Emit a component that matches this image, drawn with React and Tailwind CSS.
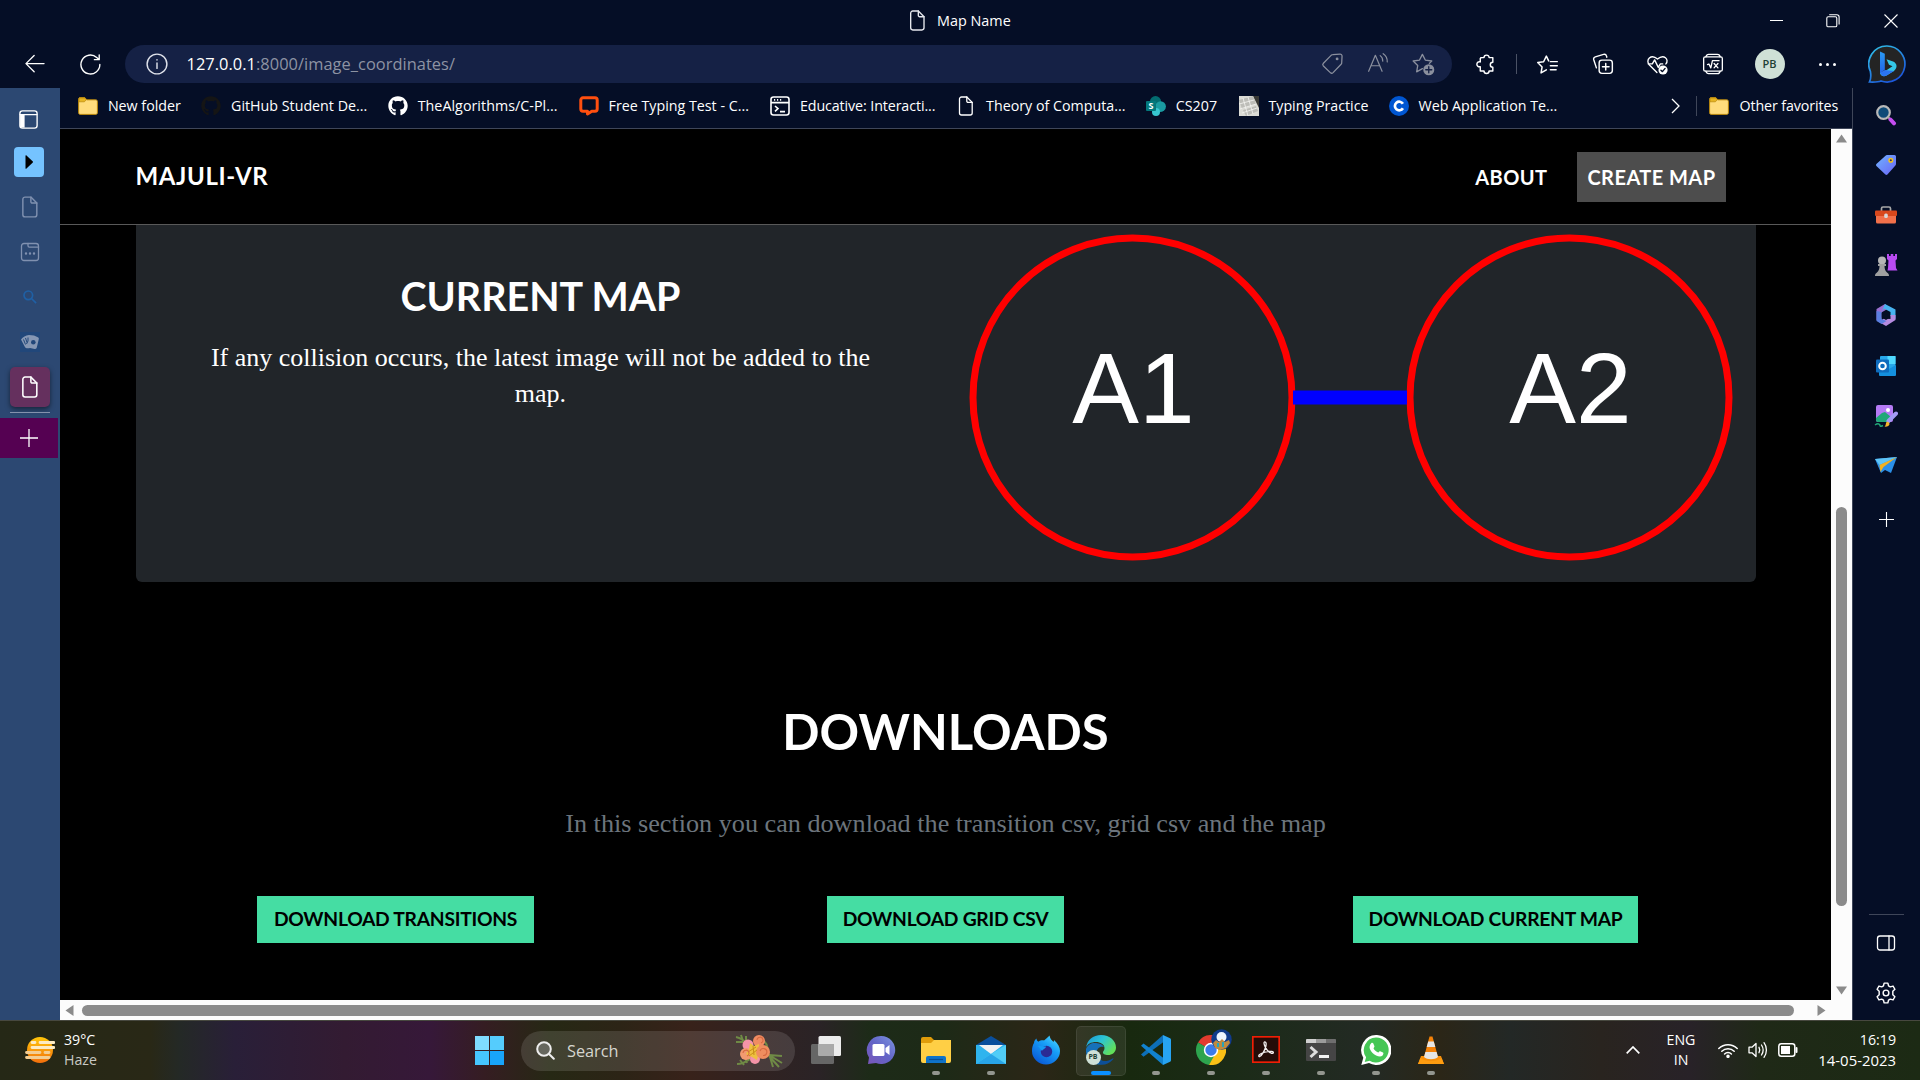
import React from "react";
import { FaGithub } from "react-icons/fa6";

const line = { fill: "none", stroke: "currentColor", strokeWidth: 1.3, strokeLinecap: "round", strokeLinejoin: "round" };

function Icon({ s = 22, className = "", children, ...rest }) {
  return (
    <svg width={s} height={s} viewBox="0 0 20 20" className={`shrink-0 ${className}`} {...line} {...rest}>
      {children}
    </svg>
  );
}

const Doc = (p) => (
  <Icon {...p}>
    <path d="M5.5 1h5.3L16.2 6.4V17a2 2 0 0 1-2 2H5.5a2 2 0 0 1-2-2V3a2 2 0 0 1 2-2z" />
    <path d="M10.8 1v4.2a1.2 1.2 0 0 0 1.2 1.2h4.2" />
  </Icon>
);

const Folder = () => (
  <svg width="20" height="20" viewBox="0 0 20 20" className="shrink-0">
    <path d="M.6 3.2C.6 2.2 1.2 1.6 2 1.6h4.8l2 2.2h8.8c1 0 1.8.6 1.8 1.6v11.4c0 1-.8 1.6-1.6 1.6H2.2c-1 0-1.6-.7-1.6-1.6z" fill="#ffdc7c" stroke="#b8860b" strokeWidth="1" />
    <path d="M1 3.2c0-.8.4-1.2 1.2-1.2h4.5l1.6 1.8-1.9 2H1z" fill="#e6b422" stroke="#b8860b" strokeWidth=".7" />
  </svg>
);

const Monkeytype = () => (
  <svg width="20" height="20" viewBox="0 0 20 20" className="shrink-0">
    <path d="M4 1.800h12a2.200 2.200 0 0 1 2.200 2.200v9a2.200 2.200 0 0 1-2.200 2.200h-3.200L8.500 18v-2.800H4A2.200 2.200 0 0 1 1.800 13V4A2.200 2.200 0 0 1 4 1.800z" fill="none" stroke="#ff4f0f" strokeWidth="3" strokeLinejoin="round" />
  </svg>
);

const Educative = () => (
  <svg width="20" height="20" viewBox="0 0 20 20" className="shrink-0" fill="none" stroke="#fff" strokeWidth="1.6">
    <rect x="1" y="1" width="18" height="18" rx="2.5" />
    <path d="M1 6.600h18M5 10l3 2.600L5 15.400M10 15.600h5" />
    <path d="M4 3.900h1.200M7 3.900h1.200M10 3.900h1.200" />
  </svg>
);

const Sharepoint = () => (
  <svg width="20" height="20" viewBox="0 0 20 20" className="shrink-0">
    <circle cx="9.5" cy="5.600" r="5.600" fill="#036c70" />
    <circle cx="14.600" cy="10.600" r="5.300" fill="#1a9ba1" />
    <circle cx="10" cy="16" r="4" fill="#37c6d0" />
    <rect x="0" y="5" width="10" height="10" rx="1" fill="#03787c" />
    <text x="5" y="13.200" textAnchor="middle" fontSize="9" fontWeight="700" fill="#fff" fontFamily="Open Sans">S</text>
  </svg>
);

const Keys = () => (
  <svg width="20" height="20" viewBox="0 0 20 20" className="shrink-0">
    <rect width="20" height="20" fill="#dcdcd6" />
    <path d="M14 0h6v12z" fill="#3a3a36" />
    <path d="M0 4l14-4 3 8L3 13zM4 14l13-4 2 5-12 5z" fill="#bdbdb8" />
    <path d="M0 8l15-4M1 13l16-5M3 17l15-5M4 2l5 18M9 1l5 17" stroke="#f5f5f2" strokeWidth=".8" />
  </svg>
);

const Coursera = () => (
  <svg width="20" height="20" viewBox="0 0 20 20" className="shrink-0">
    <circle cx="10" cy="10" r="10" fill="#0056d2" />
    <path d="M13.900 12.200a4.300 4.300 0 1 1 0-4.400" fill="none" stroke="#fff" strokeWidth="2.700" />
  </svg>
);

const bookmarks = [
  [<Folder />, "New folder", "w-[72.6px]"],
  [<FaGithub className="size-5 shrink-0 text-[#151515]" />, "GitHub Student De...", "w-[136px]"],
  [<FaGithub className="size-5 shrink-0" />, "TheAlgorithms/C-Pl...", "w-[140.4px] tracking-[0.05px]"],
  [<Monkeytype />, "Free Typing Test - C...", "w-[140.8px]"],
  [<Educative />, "Educative: Interacti...", "w-[135.5px] tracking-[-0.1px]"],
  [<Doc s={20} />, "Theory of Computa...", "w-[139.2px]"],
  [<Sharepoint />, "CS207", "w-[42px]"],
  [<Keys />, "Typing Practice", "w-[99.5px]"],
  [<Coursera />, "Web Application Te...", "w-[139px]"],
];

function TitleBar() {
  return (
    <div className="flex h-[41px] items-center">
      <div className="flex w-[1747px] items-center pl-[907px]">
        <Doc s={21} className="text-[#e6e8ee]" />
        <span className="ml-[9px] text-[14.4px]">Map Name</span>
      </div>
      <div className="flex w-[58px] justify-center"><div className="h-px w-[13px] bg-white" /></div>
      <div className="flex w-[56px] justify-center">
        <svg width="14" height="14" viewBox="0 0 14 14" fill="none" stroke="#fff" strokeWidth="1.1">
          <rect x=".8" y="2.800" width="10" height="10" rx="1.400" /><path d="M3.200.7h7.600a2.300 2.300 0 0 1 2.300 2.300v7.600" />
        </svg>
      </div>
      <div className="flex w-[59px] justify-center">
        <svg width="14" height="14" viewBox="0 0 14 14" stroke="#fff" strokeWidth="1.1"><path d="M.5.5l13 13M13.500.5l-13 13" /></svg>
      </div>
    </div>
  );
}

function Toolbar() {
  return (
    <div className="flex h-[47px] items-center pb-[1px]">
      <div className="flex w-[69px] justify-center"><svg width="20" height="20" viewBox="0 0 21 20" {...line} strokeWidth={1.4}><path d="M20 9.600H1M9.600 1L1 9.600l8.600 8.600" /></svg></div>
      <div className="flex w-[42px] justify-center">
        <svg width="21" height="21" viewBox="0 0 20 20" {...line} strokeWidth={1.3}><path d="M18.900 10a9 9 0 1 1-3-6.700l2.200 2M18.300.8v4.600h-4.600" /></svg>
      </div>
      <div className="ml-[14px] flex h-[38px] w-[1327px] items-center rounded-full bg-[#152145]">
        <Icon s={22} className="ml-[21px] text-[#dfe2ea]"><circle cx="10" cy="10" r="9" /><path d="M10 9v5M10 6v.3" /></Icon>
        <span className="ml-[18.500px] text-[16.4px] tracking-[0.04px] whitespace-nowrap">127.0.0.1<span className="text-[#8d93a3]">:8000/image_coordinates/</span></span>
        <div className="ml-auto flex pr-[6px] text-[#8a8f9d]">
          <div className="flex w-[45.5px] justify-center"><Icon s={23} strokeWidth={1.1}><path d="M10.200 2.200l6.300-.4a1.700 1.700 0 0 1 1.800 1.800l-.3 6c0 .4-.2.8-.5 1l-7 7.300a1.700 1.700 0 0 1-2.400 0l-6-5.700a1.700 1.700 0 0 1 0-2.400L9 2.700c.3-.3.7-.5 1.200-.5z" /><circle cx="14" cy="6" r=".7" fill="currentColor" /></Icon></div>
          <div className="flex w-[45.5px] justify-center"><Icon s={22} strokeWidth={1.1}><path d="M1.500 17.500L7.600 3l6.100 14.500M3.600 12.500h8M12 3.300c1.700 1.200 2.400 3 2.300 5M14.700 1.500c2.500 1.700 3.900 4.300 3.700 7.500" /></Icon></div>
          <div className="flex w-[45.5px] justify-center"><Icon s={24} strokeWidth={1.1}><path d="M9.500 13.900l-4.800 2.600.9-5.200L1.800 7.500l5.300-.8L9.500 2l2.400 4.700 5.400.8-2 2" /><circle cx="14.800" cy="14.800" r="4.600" fill="currentColor" stroke="none" /><path d="M14.800 12.300v5M12.300 14.800h5" stroke="#152145" /></Icon></div>
        </div>
      </div>
      <div className="ml-[6px] flex w-[56px] justify-center"><Icon s={22}><path d="M5.500 4.200h2.700a2.300 2.300 0 1 1 4.600 0h3.400v4.200a2.300 2.300 0 1 0 0 4.600v3.400h-3.400a2.300 2.300 0 1 1-4.600 0H4.800v-4a2.300 2.300 0 1 1 0-4.300V4.900z" /></Icon></div>
      <div className="ml-[2px] h-5 w-px bg-[#4b5265]" />
      <div className="ml-[3px] flex w-[55px] justify-center"><Icon s={23}><path d="M9 14.600l-4.600 2.700.9-5.200L1.500 8.300l5.100-.7L9 2.700l2 4.200M12.500 7.500h6M12.500 11h6M12.500 14.500h5" /></Icon></div>
      <div className="flex w-[55px] justify-center"><Icon s={22}><rect x="6.500" y="6.500" width="12" height="12" rx="2.500" /><path d="M12.500 9.500v6M9.500 12.500h6M4 13.500L1.600 6.200a2.200 2.200 0 0 1 1.400-2.700l7.500-2.200a2.200 2.200 0 0 1 2.700 1.500l.3 1" /></Icon></div>
      <div className="flex w-[55px] justify-center"><Icon s={23} strokeWidth={1.2}><path d="M9.500 17L3 10.500C-1 6 4.500.5 10 5.300 15.500.5 20.500 5.500 17.300 9.500M2 9.500h3.500L7.500 6l3.200 6.500 1.800-3h2" /><circle cx="14.800" cy="14.800" r="4" fill="#fff" stroke="none" /><path d="M13 15l1.300 1.200 2.300-2.800" stroke="#050e26" /></Icon></div>
      <div className="flex w-[55px] justify-center"><Icon s={22} strokeWidth={1.2}><rect x="1.500" y="3.500" width="17" height="13" rx="1.500" /><path d="M3.500 3.500C4 1.700 5 1.200 6 1.200h8c1.500 0 2.300 1 2.500 2.300M3.500 16.500c.5 1.800 1.500 2.300 2.500 2.300h8c1.500 0 2.300-1 2.500-2.300M5 10.500l1.300-.5L8 13.500 9.500 7h6M11 9.500l3.500 4M14.500 9.500l-3.500 4" /></Icon></div>
      <div className="flex w-[59px] justify-center"><div className="flex size-[30px] items-center justify-center rounded-full bg-[#cfe0d6] text-[11px] font-semibold text-[#1f4034]">PB</div></div>
      <div className="flex w-[56px] justify-center gap-[4px]"><i className="size-[3px] rounded-full bg-white" /><i className="size-[3px] rounded-full bg-white" /><i className="size-[3px] rounded-full bg-white" /></div>
      <div className="flex w-[64px] justify-center">
        <svg width="38" height="38" viewBox="0 0 38 38">
          <defs>
            <linearGradient id="bb" x1="0" y1="0" x2=".6" y2="1"><stop offset="0" stopColor="#31c5e8" /><stop offset="1" stopColor="#1c58dc" /></linearGradient>
            <linearGradient id="bl" x1="0" y1="0" x2="0" y2="1"><stop offset="0" stopColor="#2a9bf5" /><stop offset="1" stopColor="#2366e8" /></linearGradient>
          </defs>
          <path d="M19 1a18 18 0 1 1-6 35c-2 .9-6 1.200-11.500 1C3 34 3 30 2.400 26.500A18 18 0 0 1 19 1z" fill="#242424" stroke="url(#bb)" strokeWidth="1.700" />
          <path d="M12 6.500l4.800 2.200v16L12 28z" fill="url(#bl)" />
          <path d="M18.500 14.200l2.500 5.500 3.500 1.600-8 5.300L12 28c1 3.200 3.800 4 6.600 2.400l7.300-4.500c3.700-2.400 3.600-7.500-.8-9.300z" fill="#34c8e6" />
          <path d="M12 27.500l5-2.500 8.900.9-7.300 4.500C15.800 32 13 31 12 27.500z" fill="#2b74f0" />
        </svg>
      </div>
    </div>
  );
}

function TabStrip() {
  const dim = "text-[#8091b0]";
  return (
    <div className="flex w-[60px] shrink-0 flex-col bg-[#2c4872]">
      <div className="mt-[9px] flex h-[44px] items-center pl-[18px]">
        <Icon s={21} strokeWidth={1.3}><rect x="1.800" y="1.800" width="16.400" height="16.400" rx="2.500" /><path d="M2 5.300h16" /><rect x="2" y="5.300" width="4.300" height="12.400" fill="#fff" stroke="none" /></Icon>
      </div>
      <div className="mt-[6px] ml-[14px] flex h-[30px] w-[30px] items-center justify-center rounded-[4px] bg-[#75c3ff]">
        <svg width="8" height="14" viewBox="0 0 8 14"><path d="M.5.8C.5.200 1 0 1.500.400L7.600 6.300a1 1 0 0 1 0 1.400L1.500 13.600c-.5.400-1 .2-1-.4z" fill="#000" /></svg>
      </div>
      <div className={`mt-[7px] flex h-[45px] items-center justify-center ${dim}`}><Doc s={22} /></div>
      <div className={`flex h-[45px] items-center justify-center ${dim}`}><Icon s={20}><rect x="1.500" y="1.500" width="17" height="17" rx="2.500" /><path d="M8 1.500v2.300c0 1 .5 1.400 1.300 1.400h9.200" /><path d="M6 11.500v.1M10 11.500v.1M14 11.500v.1" strokeWidth="2.400" /></Icon></div>
      <div className="flex h-[45px] items-center justify-center text-[#1f60a5]"><svg width="14" height="14" viewBox="0 0 14 14" fill="none" stroke="currentColor" strokeWidth="1.700"><circle cx="5.300" cy="5.300" r="4.300" /><path d="M8.500 8.500l4.600 4.600" /></svg></div>
      <div className="flex h-[45px] items-center justify-center pt-[1px]">
        <div className="flex size-5 items-center justify-center bg-[#21477a]">
          <svg width="18" height="15" viewBox="0 0 18 15" fill="#8597b4"><path d="M0 4.500C2 2 4.500.5 8 0l5 .5 3.800 1.800a1.500 1.500 0 0 1 1 1.700l-2 8.500a1.800 1.800 0 0 1-2.200 1.400L9 13c-2 .6-3.500.3-4.800-.6z" /><circle cx="12.300" cy="7.200" r="2.300" fill="#21477a" /><path d="M2.500 4.500l2 5M4.500 3l1.500 4.500M7 2.500V6L5.500 9" fill="none" stroke="#21477a" strokeWidth="1" /></svg>
        </div>
      </div>
      <div className="mt-[3px] ml-[10px] flex size-[40px] items-center justify-center rounded-[5px] bg-[#65305e] shadow-[0_2px_5px_rgba(0,0,0,0.5)]"><Doc s={22} strokeWidth={1.4} /></div>
      <div className="mt-[5px] ml-[10px] h-px w-[40px] bg-[#8492ad]" />
      <div className="mt-[5px] flex h-[40px] w-[58px] items-center justify-center bg-[#550152] pb-[1px]">
        <svg width="18" height="18" viewBox="0 0 18 18" stroke="#fff" strokeWidth="1.300"><path d="M9 0v18M0 9h18" /></svg>
      </div>
    </div>
  );
}

function FavoritesBar() {
  return (
    <div className="flex h-[41px] items-center border-b border-[#3f4659] pb-[4px] pl-[18px] text-[14.25px] whitespace-nowrap">
      <div className="flex gap-[20.700px]">
        {bookmarks.map(([icon, label, w]) => (
          <div key={label} className="flex items-center gap-[9.900px]">{icon}<span className={w}>{label}</span></div>
        ))}
      </div>
      <svg className="ml-[114px]" width="9" height="16" viewBox="0 0 9 16" fill="none" stroke="#fff" strokeWidth="1.300"><path d="M1 1l7 7-7 7" /></svg>
      <div className="ml-[16px] h-5 w-px bg-[#3f4659]" />
      <div className="ml-[12px] flex items-center gap-[10px]"><Folder /><span className="tracking-[-0.1px]">Other favorites</span></div>
    </div>
  );
}

function MapDiagram() {
  return (
    <svg width="810" height="357" viewBox="0 0 810 357" fontFamily="Liberation Sans, sans-serif" fontSize="100" fontWeight="400" fill="#fff" textAnchor="middle">
      <circle cx="186.500" cy="172.500" r="159.500" fill="none" stroke="#f00" strokeWidth="7" />
      <circle cx="623.500" cy="172.500" r="159.500" fill="none" stroke="#f00" strokeWidth="7" />
      <rect x="347" y="165.500" width="114" height="14" fill="#00f" />
      <text x="187.500" y="198">A1</text>
      <text x="624.500" y="198">A2</text>
    </svg>
  );
}

const SERIF = "font-['Liberation_Serif',serif]";

function Page() {
  return (
    <div className="w-[1771px] bg-black font-['Lato',sans-serif] font-bold">
      <nav className="flex h-[96px] items-center border-b border-[#595959] pr-[105px] pl-[75.500px]">
        <span className="pb-[1px] text-[24px] tracking-[0.6px]">MAJULI-VR</span>
        <div className="ml-auto flex items-center text-[20px] tracking-[0.45px]">
          <span>ABOUT</span>
          <span className="ml-[29.500px] flex h-[50px] w-[149px] items-center justify-center bg-[#4d4d4d]">CREATE MAP</span>
        </div>
      </nav>
      <section className="mx-auto flex h-[357px] w-[1620px] rounded-b-[6px] bg-[#212529]">
        <div className="flex w-[810px] flex-col items-center pt-[47px] text-center">
          <h2 className="text-[39.400px] leading-[48px]">CURRENT MAP</h2>
          <p className={`mt-[20px] w-[680px] text-[26px] leading-[36px] font-normal ${SERIF}`}>
            If any collision occurs, the latest image will not be added to the map.
          </p>
        </div>
        <MapDiagram />
      </section>
      <section className="mx-auto w-[1650px] pt-[119px] text-center">
        <h2 className="text-[49px] leading-[60px]">DOWNLOADS</h2>
        <p className={`mt-[45px] text-[26.200px] leading-[36px] font-normal text-[#6c757d] ${SERIF}`}>
          In this section you can download the transition csv, grid csv and the map
        </p>
        <div className="mt-[54px] grid grid-cols-3 justify-items-center text-[19.300px] tracking-[-0.28px] text-black">
          <button className="h-[47px] w-[277px] bg-[#45dda3]">DOWNLOAD TRANSITIONS</button>
          <button className="h-[47px] w-[237px] bg-[#45dda3]">DOWNLOAD GRID CSV</button>
          <button className="h-[47px] w-[285px] bg-[#45dda3]">DOWNLOAD CURRENT MAP</button>
        </div>
      </section>
    </div>
  );
}

function SideBar() {
  const cell = "flex h-[50.1px] items-center justify-center";
  return (
    <div className="flex flex-1 flex-col border-l border-[#3f4659] pt-[2px] pr-[1px]">
      <div className={cell}><svg width="22" height="22" viewBox="0 0 22 22"><circle cx="8.500" cy="8.500" r="6.300" fill="#0d4a78" stroke="#b9b9b9" strokeWidth="2.200" /><path d="M13 13l2.500 2.500" stroke="#aaa" strokeWidth="2" /><path d="M15.500 15.500l3.500 3.800" stroke="#c44df0" strokeWidth="4" strokeLinecap="round" /></svg></div>
      <div className={cell}><svg width="22" height="22" viewBox="0 0 22 22"><defs><linearGradient id="tg" x1="0" y1="0" x2="1" y2="1"><stop offset="0" stopColor="#70b4ff" /><stop offset="1" stopColor="#6a63f6" /></linearGradient></defs><path d="M12 1h7.500a1.500 1.500 0 0 1 1.500 1.500V10c0 .6-.2 1-.6 1.500l-8 9a1.500 1.500 0 0 1-2 0l-9-8.500a1.500 1.500 0 0 1 0-2L10.500 1.700C11 1.200 11.400 1 12 1z" fill="url(#tg)" /><circle cx="15.800" cy="6.300" r="1.800" fill="#30306a" stroke="#f2c21c" strokeWidth="1.500" /></svg></div>
      <div className={cell}><svg width="24" height="20" viewBox="0 0 24 20"><path d="M7.500 6V3.500A1.500 1.500 0 0 1 9 2h6a1.500 1.500 0 0 1 1.500 1.500V6" fill="none" stroke="#a8a8a8" strokeWidth="1.700" /><rect x="2" y="9" width="20" height="9.500" rx="1.500" fill="#f2704a" /><rect x="1" y="5.500" width="22" height="5.500" rx="1" fill="#d9481c" /><rect x="10.200" y="8.500" width="3.600" height="4.500" rx="1.500" fill="#d8d8d8" /></svg></div>
      <div className={cell}><svg width="24" height="24" viewBox="0 0 24 24"><path d="M13 1h2v2h1.700V1h2.600v2H21V1h2v5l-1.500 1.500.5 7.500 1.500 2.500h-10L14 15l.5-7.500L13 6z" fill="#b94bf3" /><circle cx="8" cy="7.500" r="4" fill="#b5b5b5" /><path d="M4 11h8v2h-1.500c0 3 .8 5 2.500 6.500 1.500 1 2 2 2 3.500H1c0-1.500.5-2.500 2-3.500C4.700 18 5.500 16 5.500 13H4z" fill="#a0a0a0" /></svg></div>
      <div className={cell}><svg width="22" height="24" viewBox="0 0 22 24"><path d="M10 1L1.500 6v11l5 2.500V9.500L14 5z" fill="#9a6fd0" /><path d="M10 1l10.500 5.500V16l-5-3V9L9 5.500 6.500 9z" fill="#47b3f0" /><path d="M20.500 12v5L11 23l-7-4 5-3.500 6.500.5V12z" fill="#b68be0" /><path d="M1.500 8l5 1v7l5 2-5 3-5-3z" fill="#5a7fe0" /><path d="M11 7.800l4 2.200v4.500L11 17l-4.200-2.500V10z" fill="#050e26" /></svg></div>
      <div className={cell}><svg width="22" height="22" viewBox="0 0 22 22"><rect x="5" y="1" width="15.500" height="14" rx="1" fill="#28a8ea" /><rect x="12.500" y="1" width="8" height="8" fill="#50d9ff" /><path d="M4 10l8 5 9-5v10a1 1 0 0 1-1 1H5a1 1 0 0 1-1-1z" fill="#1490df" /><rect x="1" y="4.500" width="13" height="13" rx="1" fill="#0f6cbd" /><circle cx="7.500" cy="11" r="3.300" fill="none" stroke="#fff" strokeWidth="2" /></svg></div>
      <div className={cell}><svg width="24" height="24" viewBox="0 0 24 24"><rect x="2" y="1" width="17" height="17" rx="2" fill="#b57bf5" /><path d="M2 14l6-5 3-1 6 5-4 5H4a2 2 0 0 1-2-2z" fill="#21a878" /><circle cx="14" cy="6" r="2" fill="#fff" /><path d="M22 9.500L14.500 17" stroke="#a29bf5" strokeWidth="4" strokeLinecap="round" /><path d="M10.500 22.500c1.500-.5 1-3 2-4.500 1.500-1 3 .5 3 2 0 2-3 3-5 2.500z" fill="#f5b52c" /><path d="M1 21c3-2 5-1 5 .5s2 .5 3 0" fill="none" stroke="#21a878" strokeWidth="1.500" /></svg></div>
      <div className={cell}><svg width="22" height="18" viewBox="0 0 22 18"><path d="M0 2l22-2-6 16-6-3-4 3z" fill="#2b8fe8" /><path d="M0 2l22-2L4.500 8z" fill="#5ec4f7" /><path d="M22 0L4.500 8 5.500 15l3-5z" fill="#f2b11e" /></svg></div>
      <div className="flex h-[58px] items-center justify-center"><svg width="15" height="15" viewBox="0 0 15 15" stroke="#fff" strokeWidth="1.100"><path d="M7.500 0v15M0 7.500h15" /></svg></div>
      <div className="mt-auto h-px w-[35px] self-center bg-[#3f4659]" />
      <div className="mt-[3px] flex h-[50px] items-center justify-center"><Icon s={20}><rect x="1.500" y="3" width="17" height="14" rx="2.500" /><path d="M13 3v14" /></Icon></div>
      <div className="mb-[2px] flex h-[50px] items-center justify-center"><Icon s={22}><path d="M8.300 1h3.400l.6 2.500 1.600.9 2.500-.7 1.700 2.900-1.900 1.800v3.200l1.900 1.800-1.700 2.900-2.500-.7-1.600.9-.6 2.500H8.300l-.6-2.500-1.600-.9-2.500.7-1.700-2.900 1.900-1.800V8.400L1.900 6.600l1.700-2.900 2.500.7 1.600-.9z" /><circle cx="10" cy="10" r="2.600" /></Icon></div>
    </div>
  );
}

function TaskIcon({ children, dot = true }) {
  return (
    <div className="flex h-[60px] w-[55px] flex-col items-center">
      <div className="mt-[8px] flex h-[42px] items-center">{children}</div>
      {dot && <div className="h-[4px] w-[8px] rounded-full bg-[#93968f]" />}
    </div>
  );
}

function Taskbar() {
  return (
    <div className="flex h-[60px] items-center border-t border-[#47483f] bg-[linear-gradient(90deg,#252816_0px,#292816_150px,#242926_180px,#291f38_235px,#331b32_345px,#361839_430px,#351d22_485px,#262814_550px,#2c2416_620px,#38221a_690px,#34221f_730px,#2a2326_820px,#1d2b18_870px,#1d2a17_940px,#2b2617_1040px,#18290f_1130px,#1b2b17_1230px,#232a24_1370px,#2b2617_1440px,#232826_1510px,#29241f_1600px,#282228_1690px,#1f2917_1760px,#1c2a14_1920px)] text-[14.200px] leading-[20px]">
      <div className="flex w-[475px] items-center pb-[1px] pl-[25px]">
        <svg width="30" height="28" viewBox="0 0 30 28"><defs><linearGradient id="sun" x1="0" y1="0" x2="0" y2="1"><stop offset="0" stopColor="#ffc60a" /><stop offset="1" stopColor="#f26f0c" /></linearGradient></defs><circle cx="15" cy="14" r="13" fill="url(#sun)" /><path d="M7 6.500h3M15 6.500h14M7 11.500h22" stroke="#fdebc3" strokeWidth="2.800" strokeLinecap="round" /><path d="M1.500 16.500H15M20 16.500h4M1.500 21.500H24" stroke="#f3cd92" strokeWidth="2.800" strokeLinecap="round" /></svg>
        <div className="ml-[9px]"><div>39°C</div><div className="text-[#c9c9c4]">Haze</div></div>
      </div>
      <div className="grid size-[29px] grid-cols-2 gap-[1px]">
        <div className="bg-[#7fdcff]" /><div className="bg-[#55ccfd]" /><div className="bg-[#46c6ff]" /><div className="bg-[#18a4fb]" />
      </div>
      <div className="ml-[17px] flex h-[40px] w-[274px] items-center rounded-full bg-white/12 pr-[12px] pl-[15px]">
        <svg width="19" height="19" viewBox="0 0 19 19" fill="#66675e" stroke="#eee" strokeWidth="2" strokeLinecap="round"><circle cx="8" cy="8" r="6.800" /><path d="M13 13l4.800 4.800" /></svg>
        <span className="ml-[12px] text-[16.300px] text-[#d6d6cf]">Search</span>
        <svg className="ml-auto" width="48" height="34" viewBox="0 0 48 34">
          <path d="M1 3c5 1 9 4 13 8M6 1l2 6M1 8h7M11 2v6M2 30c5 0 9-2 13-5M5 26l4 5M10 24l2 5M29 7c3 3 4 6 3 9M34 21l13 8M34 22l10 11M35 23l3 10M34 21l13 1" stroke="#6f8a45" strokeWidth="2" fill="none" />
          <circle cx="13" cy="11" r="5.500" fill="#f494a8" /><circle cx="24" cy="7" r="6" fill="#f08c62" /><circle cx="11" cy="20" r="6" fill="#f29a70" /><circle cx="20" cy="25" r="5" fill="#f493a8" /><path d="M11 20l3-5 1-6 4 3 5-2v5l4 3-5 4-1 4-5-3z" fill="#eec040" /><circle cx="28" cy="18" r="7" fill="#ef8e5f" />
          <path d="M13 18l8-5M14 22l8-6M18 12l1 9" stroke="#c98f1a" strokeWidth="1" /><path d="M25 17a3.500 3.500 0 1 1 3 4.500M22 6a3 3 0 1 1 4 3M8 19a3 3 0 1 1 4 3" fill="none" stroke="#d76b42" strokeWidth="1.100" />
        </svg>
      </div>
      <div className="ml-[3px] flex">
        <TaskIcon dot={false}><svg width="30" height="28" viewBox="0 0 30 28"><rect x="0" y="8" width="23" height="20" rx="1.500" fill="#666" /><rect x="7.500" y="0" width="22.500" height="20" rx="1.500" fill="#ececec" /><rect x="7.500" y="8" width="15.500" height="12" fill="#aaa" /></svg></TaskIcon>
        <TaskIcon dot={false}><svg width="30" height="30" viewBox="0 0 30 30"><defs><linearGradient id="ch" x1="0" y1="1" x2="1" y2="0"><stop offset="0" stopColor="#7a55b8" /><stop offset=".5" stopColor="#6264c7" /><stop offset="1" stopColor="#7c94e0" /></linearGradient></defs><path d="M15 1a14 14 0 1 1-5 27L2 29l1-6.500A14 14 0 0 1 15 1z" fill="url(#ch)" /><rect x="6.500" y="9" width="12" height="12" rx="1.500" fill="#fff" /><path d="M19.500 13l4-3v10l-4-3z" fill="#fff" /></svg></TaskIcon>
        <TaskIcon><svg width="30" height="28" viewBox="0 0 30 28"><path d="M0 3a2 2 0 0 1 2-2h8l3 3h15a2 2 0 0 1 2 2v6H0z" fill="#e09c0a" /><path d="M0 7h10l3-3h17v21a2 2 0 0 1-2 2H2a2 2 0 0 1-2-2z" fill="#ffcf45" /><path d="M5 27v-5a2 2 0 0 1 2-2h16a2 2 0 0 1 2 2v5z" fill="#0f73c9" /><path d="M8 23.500h14" stroke="#0a4e94" strokeWidth="1.200" /></svg></TaskIcon>
        <TaskIcon><svg width="30" height="28" viewBox="0 0 30 28"><path d="M0 9L15 0l15 9v4H0z" fill="#0a4f9c" /><path d="M0 9h30v19H0z" fill="#2fb4ee" /><path d="M3 9h24l-12 9z" fill="#f2f2f2" /><path d="M30 9L15 18 0 28h30z" fill="#51cdf7" /><path d="M15 18l15 10H0z" fill="#28a5e8" /></svg></TaskIcon>
        <TaskIcon dot={false}><svg width="30" height="30" viewBox="0 0 30 30"><defs><linearGradient id="fx" x1="1" y1="0" x2=".3" y2="1"><stop offset="0" stopColor="#58e4ff" /><stop offset=".45" stopColor="#179df7" /><stop offset="1" stopColor="#0a5bd8" /></linearGradient></defs><path d="M3 8c0-2 1.500-4 2.500-4.500 0 1.500.8 2.500 1.800 3.200C9 5.500 11 5.200 13 5.400 15 4 17 2 18.500.5c.5 3 2 4.500 4 6.500C23 6 23 5.500 23 5c4 4 6 7 6 11a14 13.500 0 0 1-28 0c0-3.500.8-6 2-8z" fill="url(#fx)" /><circle cx="15.500" cy="16.500" r="5.700" fill="#2b2a94" /><path d="M7 11c3-1 5 1 8 .5 0 2-3 2.500-4 4.500" fill="#159af5" /></svg></TaskIcon>
        <div className="mx-[2.500px] mt-[5px] flex h-[50px] w-[50px] flex-col items-center rounded-[5px] bg-white/8 ring-1 ring-white/8 ring-inset">
          <div className="relative mt-[9px] h-[36px] w-[30px]">
            <svg width="30" height="30" viewBox="0 0 30 30"><defs><linearGradient id="eg" x1="0" y1="0" x2="1" y2=".6"><stop offset="0" stopColor="#1a93d6" /><stop offset=".5" stopColor="#2cc4d4" /><stop offset="1" stopColor="#62e05a" /></linearGradient></defs><path d="M0 13C1 5 7 0 15 0c9 0 15 6 15 12.500 0 5-4 7.500-8 7.500-3 0-5.500-1-5-3 .3-1 1.500-1.500 1.500-4 0-3.500-4-6-8.500-6C5 7 1 9 0 13z" fill="url(#eg)" /><path d="M0 14C2 9 6 7.500 10 8c4 .3 7 2 8 4-4-1.500-8 2-7.500 7 .5 5 6 8.500 11 7.500C13 33-1 29 0 14z" fill="#1671b9" /><path d="M10.500 18c0 6 6 9.500 12 7.500 2-.7 3.500-1.500 4.700-2.500.5.5 0 1.500-.7 2C23 29 18 30.500 13.500 29.500z" fill="#0d4f97" /></svg>
            <span className="absolute top-[15px] left-0 flex size-[15px] items-center justify-center rounded-full bg-[#cfe0d6] text-[7px] font-bold text-[#1f4034]">PB</span>
          </div>
          <div className="h-[4px] w-[20px] rounded-full bg-[#0a90ff]" />
        </div>
        <TaskIcon><svg width="30" height="30" viewBox="0 0 30 30"><path d="M22 0L0 19.500l2.500 2.200L22.500 7z" fill="#0d6fb8" /><path d="M2.500 8.500L0 10.700 22 30l.5-7z" fill="#1182cf" /><path d="M22 0l6.500 3c1 .4 1.500 1 1.500 2v20c0 1-.5 1.600-1.500 2L22 30z" fill="#27a4f2" /></svg></TaskIcon>
        <TaskIcon>
          <div className="relative size-[30px]">
            <svg width="30" height="30" viewBox="0 0 30 30"><path d="M15 15L2 7.500A15 15 0 0 1 28 7.500H15z" fill="#e33b2e" /><path d="M2 7.500a15 15 0 0 0 11 22.400L21.500 18.700 15 15z" fill="#2da44e" /><path d="M28 7.500a15 15 0 0 1-15 22.400l8.500-14.900L15 7.500z" fill="#fbc116" /><circle cx="15" cy="15" r="7.200" fill="#fff" /><circle cx="15" cy="15" r="5.700" fill="#3b7bea" /></svg>
            <svg className="absolute -top-[6px] left-[15px]" width="21" height="21" viewBox="0 0 21 21"><circle cx="10.500" cy="10.500" r="10.200" fill="#103a8c" /><circle cx="10.500" cy="8" r="5" fill="#eef4ff" /><path d="M2 14l3-3 3 2 3-3 3 3 4-2 1 3-4 5-6 2-5-2z" fill="#c08a3e" /><path d="M7 14v4M12 13v5" stroke="#2aa3b8" strokeWidth="2" /></svg>
          </div>
        </TaskIcon>
        <TaskIcon><svg width="28" height="27" viewBox="0 0 28 27"><rect x=".8" y=".8" width="26.400" height="25.400" fill="#250c08" stroke="#f01e05" strokeWidth="1.700" /><path d="M12.500 6c1.800-.5 1.900 2 1.300 4.500-1 4-4 9-6 10-1.500.3-1.500-1.300.5-2.500 3-1.900 8-3 11.500-2.500 2.300.4 1.900 2.200 0 1.900-3-.5-6.300-4.900-7.300-8.200-.6-1.600-.6-2.900 0-3.200z" fill="none" stroke="#f3eeee" strokeWidth="1.300" /></svg></TaskIcon>
        <TaskIcon><svg width="30" height="22" viewBox="0 0 30 22"><rect width="30" height="22" rx="1" fill="#454545" /><path d="M0 1a1 1 0 0 1 1-1h9v4H0z" fill="#d0d0d0" /><rect x="10" width="10" height="4" fill="#9b9b9b" /><path d="M20 0h9a1 1 0 0 1 1 1v3H20z" fill="#6e6e6e" /><path d="M4.500 8l5.500 5-5.500 5" fill="none" stroke="#ddd" strokeWidth="3" /><rect x="13" y="16" width="10" height="3" fill="#f2f2f2" /></svg></TaskIcon>
        <TaskIcon>
          <svg width="30" height="30" viewBox="0 0 30 30"><path d="M15 0a15 15 0 1 1-7 28L.3 30l2-7.300A15 15 0 0 1 15 0z" fill="#fff" /><path d="M15 2.500a12.500 12.500 0 1 1-6.300 23.200l-5 1.300 1.400-4.800A12.500 12.500 0 0 1 15 2.500z" fill="#45c655" /><path d="M10.200 8.200c.7-.7 1.700-.6 2 .1l1.200 2.800c.2.5 0 1-.9 2.200.9 2 2.700 3.500 4.700 4.300.9-1 1.300-1.700 2-1.400l2.800 1.400c.7.4.4 2-.4 2.800-1.700 1.700-4 1.200-6.500 0-3-1.500-5-3.800-6.200-6.500-.7-2-.2-4.200 1.300-5.700z" fill="#fff" /></svg>
        </TaskIcon>
        <TaskIcon><svg width="26" height="28" viewBox="0 0 26 28"><path d="M3 20h20l3 8H0z" fill="#f78f0a" /><path d="M11.500.5h3L20 21c-3 3-11 3-14 0z" fill="#f58208" /><path d="M10.200 5.500h5.600l1.500 5.500h-8.600zM7.400 16h11.200L20 21c-3 3-11 3-14 0z" fill="#e6e6e6" /><path d="M2.500 22L0 28h26l-2.500-6c-4 4-17 4-21 0z" fill="#ff9d10" /></svg></TaskIcon>
      </div>
      <div className="ml-auto flex items-center pr-[24px] pb-[1px]">
        <svg width="14" height="8" viewBox="0 0 14 8" fill="none" stroke="#fff" strokeWidth="1.700"><path d="M.7 7.300L7 1l6.300 6.300" /></svg>
        <div className="ml-[26px] w-[30px] text-center"><div>ENG</div><div>IN</div></div>
        <svg className="ml-[22px]" width="20" height="15" viewBox="0 0 20 15" fill="none" stroke="#fff" strokeWidth="1.500" strokeLinecap="round"><path d="M.8 5.500a13 13 0 0 1 18.400 0M3.800 8.300a8.800 8.800 0 0 1 12.400 0M6.600 11a4.800 4.800 0 0 1 6.800 0" /><circle cx="10" cy="13.300" r="1" fill="#fff" /></svg>
        <svg className="ml-[10px]" width="20" height="18" viewBox="0 0 20 18" fill="none" stroke="#fff" strokeWidth="1.300" strokeLinecap="round" strokeLinejoin="round"><path d="M1 6.200h3L8 2.500v13l-4-3.700H1zM11 6.300c1 1.700 1 3.700 0 5.400M13.500 4c2 3 2 7 0 10M16 1.700c3.200 4.300 3.200 10.300 0 14.600" /></svg>
        <svg className="ml-[10px]" width="20" height="14" viewBox="0 0 20 14" fill="none" stroke="#fff" strokeWidth="1.500"><rect x=".8" y=".8" width="16" height="12.400" rx="2.500" /><rect x="3" y="3" width="9" height="8" fill="#fff" stroke="none" /><path d="M18.500 5v4" strokeWidth="2" strokeLinecap="round" /></svg>
        <div className="ml-[20px] w-[78px] text-right whitespace-nowrap"><div>16:19</div><div className="text-[14.900px]">14-05-2023</div></div>
      </div>
    </div>
  );
}

const Arrow = ({ className }) => <svg className={className} width="11" height="9" viewBox="0 0 11 9"><path d="M5.500.5L11 8.500H0z" fill="#8b8b8b" /></svg>;

export default function App() {
  return (
    <div className="flex h-[1080px] w-[1920px] flex-col overflow-hidden bg-[#050e26] font-['Open_Sans',sans-serif] text-white">
      <TitleBar />
      <Toolbar />
      <div className="flex min-h-0 flex-1">
        <TabStrip />
        <div className="flex w-[1792px] flex-col">
          <FavoritesBar />
          <div className="flex h-[871px] overflow-hidden bg-[#fcfcfc]">
            <Page />
            <div className="flex flex-1 flex-col items-center">
              <Arrow className="mt-[5px]" />
              <div className="mt-[364px] h-[399px] w-[11px] rounded-full bg-[#8b8b8b]" />
              <Arrow className="mt-auto mb-[5px] rotate-180" />
            </div>
          </div>
          <div className="flex h-[20px] items-center bg-[#fcfcfc]">
            <Arrow className="ml-[4px] -rotate-90" />
            <div className="ml-[7px] h-[11px] w-[1712px] rounded-full bg-[#8b8b8b]" />
            <Arrow className="ml-[22px] rotate-90" />
          </div>
        </div>
        <SideBar />
      </div>
      <Taskbar />
    </div>
  );
}
